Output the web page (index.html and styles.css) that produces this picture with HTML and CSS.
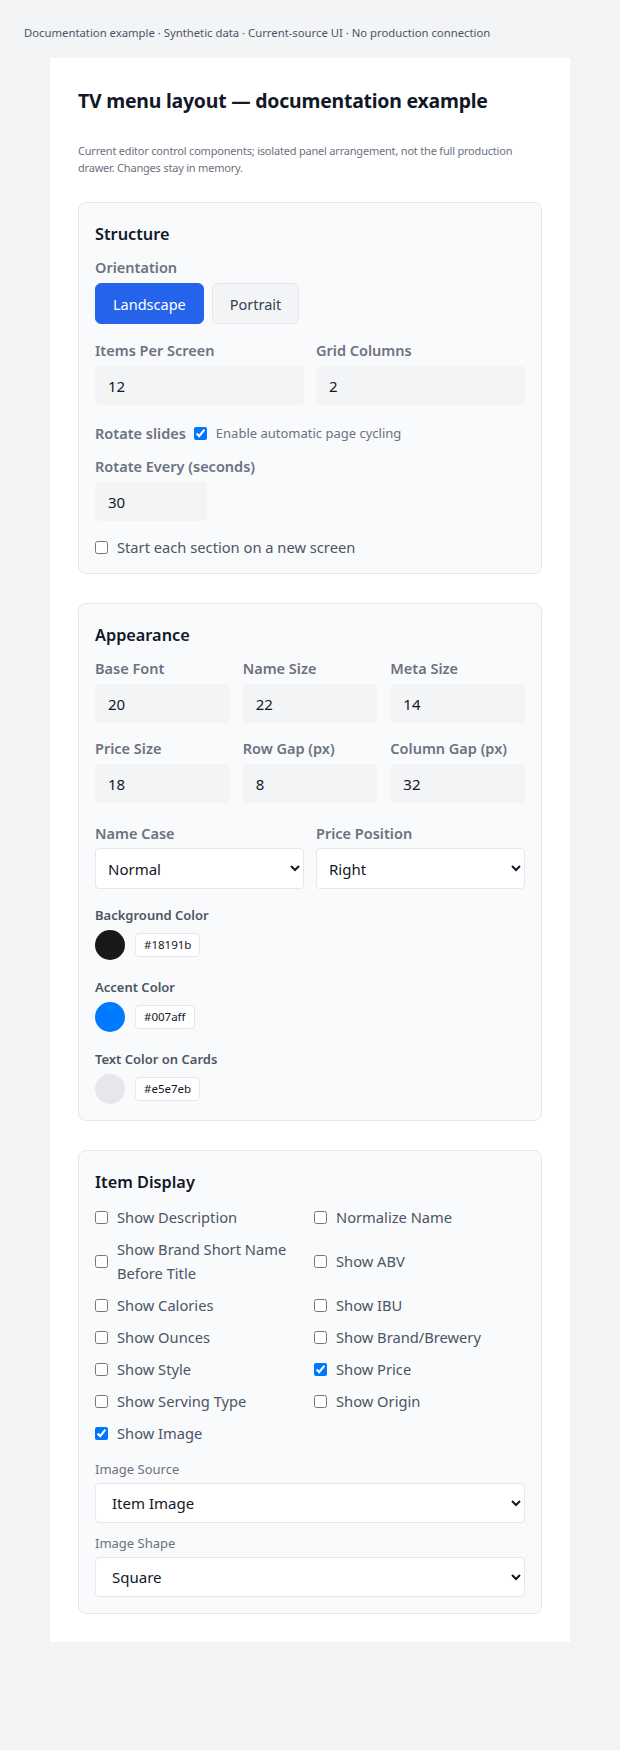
FILE: index.html
```html
<!DOCTYPE html>
<html lang="en">
<head>
    <meta charset="UTF-8">
    <meta name="viewport" content="width=device-width, initial-scale=1.0">
    <title>TV menu layout</title>
    <link rel="stylesheet" href="styles.css">
</head>
<body>

    <p class="note">Documentation example · Synthetic data · Current-source UI · No production connection</p>

    <main class="panel">
        <h1>TV menu layout — documentation example</h1>
        <p class="lead">Current editor control components; isolated panel arrangement, not the full production drawer. Changes stay in memory.</p>

        <!-- structure -->
        <section class="card">
            <h2>Structure</h2>
            <div class="field orientation">
                <label>Orientation</label>
                <div class="toggle">
                    <button class="btn active">Landscape</button>
                    <button class="btn">Portrait</button>
                </div>
            </div>
            <div class="grid two gap-row">
                <div class="field">
                    <label for="perScreen">Items Per Screen</label>
                    <input type="text" id="perScreen" value="12">
                </div>
                <div class="field">
                    <label for="gridCols">Grid Columns</label>
                    <input type="text" id="gridCols" value="2">
                </div>
            </div>
            <div class="rotate-row">
                <span class="label-inline">Rotate slides</span>
                <input type="checkbox" id="rotate" checked>
                <label for="rotate" class="hint">Enable automatic page cycling</label>
            </div>
            <div class="field rotate-every">
                <label for="rotateEvery">Rotate Every (seconds)</label>
                <input type="text" id="rotateEvery" class="short" value="30">
            </div>
            <label class="check">
                <input type="checkbox"> Start each section on a new screen
            </label>
        </section>

        <!-- appearance -->
        <section class="card">
            <h2>Appearance</h2>
            <div class="grid three">
                <div class="field">
                    <label>Base Font</label>
                    <input type="text" value="20">
                </div>
                <div class="field">
                    <label>Name Size</label>
                    <input type="text" value="22">
                </div>
                <div class="field">
                    <label>Meta Size</label>
                    <input type="text" value="14">
                </div>
                <div class="field">
                    <label>Price Size</label>
                    <input type="text" value="18">
                </div>
                <div class="field">
                    <label>Row Gap (px)</label>
                    <input type="text" value="8">
                </div>
                <div class="field">
                    <label>Column Gap (px)</label>
                    <input type="text" value="32">
                </div>
            </div>
            <div class="grid two selects">
                <div class="field">
                    <label>Name Case</label>
                    <select>
                        <option>Normal</option>
                        <option>Uppercase</option>
                    </select>
                </div>
                <div class="field">
                    <label>Price Position</label>
                    <select>
                        <option>Right</option>
                        <option>Below</option>
                    </select>
                </div>
            </div>
            <div class="color-field">
                <div class="color-label">Background Color</div>
                <div class="color-row">
                    <span class="swatch" style="background: #18191b"></span>
                    <span class="hex">#18191b</span>
                </div>
            </div>
            <div class="color-field">
                <div class="color-label">Accent Color</div>
                <div class="color-row">
                    <span class="swatch" style="background: #007aff"></span>
                    <span class="hex">#007aff</span>
                </div>
            </div>
            <div class="color-field">
                <div class="color-label">Text Color on Cards</div>
                <div class="color-row">
                    <span class="swatch" style="background: #e5e7eb"></span>
                    <span class="hex">#e5e7eb</span>
                </div>
            </div>
        </section>

        <!-- item display -->
        <section class="card">
            <h2>Item Display</h2>
            <div class="checks">
                <label class="check"><input type="checkbox"> Show Description</label>
                <label class="check"><input type="checkbox"> Normalize Name</label>
                <label class="check"><input type="checkbox"> Show Brand Short Name Before Title</label>
                <label class="check"><input type="checkbox"> Show ABV</label>
                <label class="check"><input type="checkbox"> Show Calories</label>
                <label class="check"><input type="checkbox"> Show IBU</label>
                <label class="check"><input type="checkbox"> Show Ounces</label>
                <label class="check"><input type="checkbox"> Show Brand/Brewery</label>
                <label class="check"><input type="checkbox"> Show Style</label>
                <label class="check"><input type="checkbox" checked> Show Price</label>
                <label class="check"><input type="checkbox"> Show Serving Type</label>
                <label class="check"><input type="checkbox"> Show Origin</label>
                <label class="check"><input type="checkbox" checked> Show Image</label>
            </div>
            <div class="small-field">
                <label for="imgSource">Image Source</label>
                <select id="imgSource" class="wide">
                    <option>Item Image</option>
                    <option>Brand Logo</option>
                </select>
            </div>
            <div class="small-field">
                <label for="imgShape">Image Shape</label>
                <select id="imgShape" class="wide">
                    <option>Square</option>
                    <option>Circle</option>
                </select>
            </div>
        </section>
    </main>

</body>
</html>
```

FILE: styles.css
```css
body {
    margin: 0;
    padding: 24px;
    background-color: #f3f4f6;
    font-family: "Segoe UI", "Noto Sans", sans-serif;
    color: #111827;
}

.note {
    margin: 0 0 16px;
    font-size: 11.3px;
    line-height: 18px;
    color: #4b5563;
}

.panel {
    max-width: 520px;
    margin: 0 auto;
    padding: 28px;
    box-sizing: border-box;
    background-color: white;
}

h1 {
    margin: 0;
    font-size: 19.4px;
    line-height: 30px;
    font-weight: 700;
    letter-spacing: -0.2px;
}

.lead {
    margin: 26px 0 0;
    font-size: 11px;
    line-height: 17px;
    letter-spacing: -0.2px;
    color: #6b7280;
}

.card {
    margin-top: 26px;
    padding: 18px 16px 16px;
    background-color: #f9fafb;
    border: 1px solid #e5e7eb;
    border-radius: 8px;
}

.card + .card {
    margin-top: 29px;
}

h2 {
    margin: 0 0 10px;
    font-size: 16.3px;
    line-height: 26px;
    font-weight: 600;
}

.field label,
.label-inline {
    display: block;
    margin-bottom: 6px;
    font-size: 14.5px;
    line-height: 20px;
    font-weight: 600;
    color: #6b7280;
}

.field input {
    display: block;
    width: 100%;
    height: 39px;
    box-sizing: border-box;
    padding: 0 12px;
    font-family: inherit;
    font-size: 15px;
    color: #111827;
    background-color: #f3f4f6;
    border: 1px solid #f3f4f6;
    border-radius: 4px;
}

.field input.short {
    width: 112px;
}

.orientation {
    margin-bottom: 16px;
}

.toggle {
    display: flex;
    gap: 8px;
}

.btn {
    height: 41px;
    padding: 0 17px;
    font-family: inherit;
    font-size: 14.5px;
    color: #374151;
    background-color: #f3f4f6;
    border: 1px solid #e5e7eb;
    border-radius: 6px;
    cursor: pointer;
}

.btn.active {
    color: white;
    background-color: #2563eb;
    border-color: #2563eb;
}

.grid {
    display: grid;
    column-gap: 12px;
}

.grid.two {
    grid-template-columns: 1fr 1fr;
}

.grid.three {
    grid-template-columns: 1fr 1fr 1fr;
    row-gap: 15px;
    column-gap: 13px;
}

.gap-row {
    margin-bottom: 18px;
}

.rotate-row {
    display: flex;
    align-items: center;
    height: 20px;
    margin-bottom: 13px;
}

.rotate-row .label-inline {
    margin: 0 8px 0 0;
}

.rotate-row input {
    margin: 0 9px 0 0;
}

.hint {
    font-size: 13px;
    color: #6b7280;
}

.rotate-every {
    margin-bottom: 16px;
}

.check {
    display: flex;
    align-items: center;
    gap: 9px;
    font-size: 14.7px;
    line-height: 24px;
    color: #4b5563;
}

.check input {
    flex: none;
    margin: 0;
}

.card > .check {
    line-height: 20px;
}

/* selects */
.selects {
    margin-top: 20px;
}

.selects label {
    margin-bottom: 5px;
}

select {
    width: 100%;
    height: 41px;
    padding: 0 8px;
    font-family: inherit;
    font-size: 15px;
    color: #111827;
    background-color: white;
    border: 1px solid #e5e7eb;
    border-radius: 4px;
}

select.wide {
    height: 40px;
    padding: 0 12px;
}

/* colors */
.color-field {
    margin-top: 17px;
}

.color-field + .color-field {
    margin-top: 18px;
}

.color-label {
    margin-bottom: 6px;
    font-size: 13px;
    line-height: 18px;
    font-weight: 600;
    color: #4b5563;
}

.color-row {
    display: flex;
    align-items: center;
    gap: 10px;
}

.swatch {
    width: 30px;
    height: 30px;
    border-radius: 50%;
}

.hex {
    height: 24px;
    padding: 0 8px;
    box-sizing: border-box;
    font-size: 11.5px;
    line-height: 22px;
    color: #111827;
    background-color: white;
    border: 1px solid #e5e7eb;
    border-radius: 4px;
}

/* item display */
.checks {
    display: grid;
    grid-template-columns: 1fr 1fr;
    column-gap: 8px;
    row-gap: 8px;
    margin-bottom: 15px;
}

.small-field label {
    display: block;
    margin-bottom: 5px;
    font-size: 13px;
    line-height: 18px;
    color: #6b7280;
}

.small-field + .small-field {
    margin-top: 11px;
}
```
